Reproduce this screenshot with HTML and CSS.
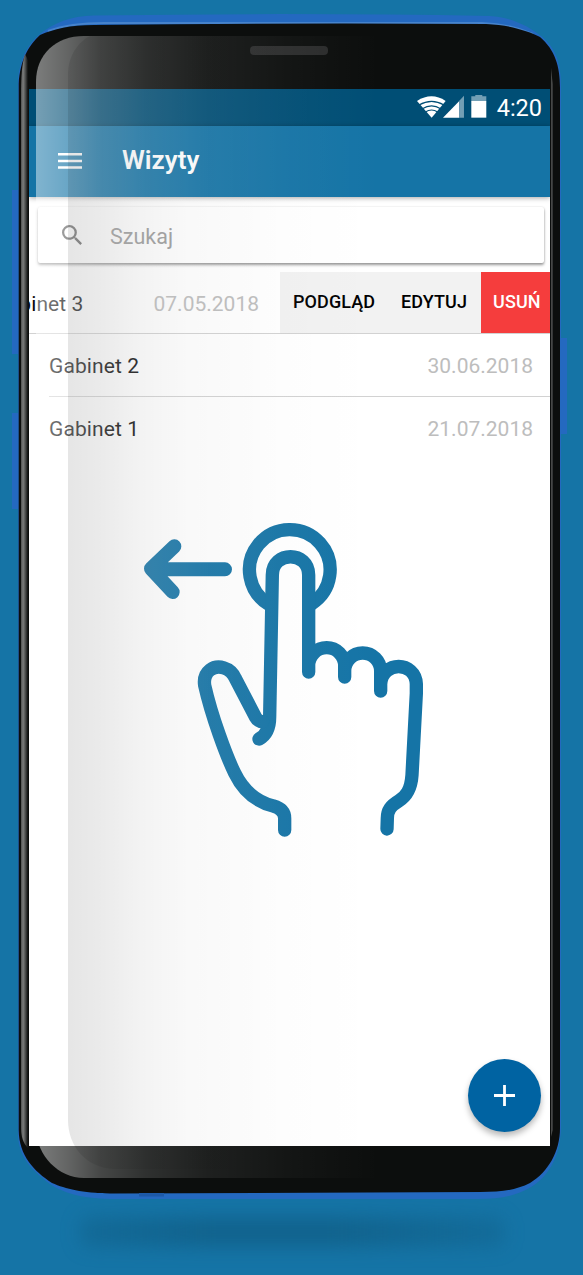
FILE: index.html
```html
<!DOCTYPE html>
<html lang="pl">
<head>
<meta charset="utf-8">
<title>Wizyty</title>
<link rel="stylesheet" href="styles.css">
</head>
<body>
<div class="stage">
  <svg class="layer chassis" viewBox="0 0 583 1275" aria-hidden="true">
    <defs>
      <linearGradient id="rim" x1="20.5" x2="28" y1="0" y2="0" gradientUnits="userSpaceOnUse">
        <stop offset="0" stop-color="#454746"/>
        <stop offset=".35" stop-color="#7b7d7c"/>
        <stop offset=".6" stop-color="#555756"/>
        <stop offset="1" stop-color="#0c0e0d"/>
      </linearGradient>
      <linearGradient id="floor" x1="0" x2="1" y1="0" y2="0">
        <stop offset="0" stop-color="#11628c" stop-opacity=".55"/>
        <stop offset=".3" stop-color="#11628c" stop-opacity=".95"/>
        <stop offset=".6" stop-color="#11628c" stop-opacity=".95"/>
        <stop offset="1" stop-color="#11628c" stop-opacity=".45"/>
      </linearGradient>
      <filter id="soft" x="-20%" y="-150%" width="140%" height="400%" color-interpolation-filters="sRGB"><feGaussianBlur stdDeviation="9"/></filter>
    </defs>
    <rect x="80" y="1217" width="425" height="30" rx="10" fill="url(#floor)" filter="url(#soft)"/>
    <path fill="#2469c0" d="M12 190h7v164h-7zM12 413h7v96h-7zM560 338h7v96h-7z"/>
    <path fill="#2469c0" d="M18 80C20 58 28 44 40 34C54 23 70 16 94 15.500Q300 12.500 490 16C512 17 530 27 541 36C556 48 561 64 561 86V1128C560 1160 546 1178 531 1187C516 1196 500 1199 478 1199H110C80 1198 64 1193 50 1184C32 1170 19 1158 18 1135Z"/>
    <path fill="none" stroke="#4683cc" stroke-width="2" d="M48 31Q70 23 104 23H482Q510 24 533 34"/>
    <path fill="#0c0e0d" d="M18.700 84C20 60 29 45 40 35C54 29 70 25 94 25Q300 22.500 486 24C510 25 528 31 540 37C555 50 560 66 560 88V1128C560 1152 548 1172 530 1183C516 1190 502 1192 480 1192L110 1193.500C82 1193 66 1189 52 1183C34 1171 19 1156 18.700 1130Z"/>
    <rect x="139" y="1193" width="25" height="3.500" fill="#1d59a8"/>
    <path fill="url(#rim)" d="M25 54C22 64 21 76 21 92V1128C21 1136 23 1143 28 1148V60Z"/>
    <path fill="#555756" d="M551.200 68L552.600 84V1130L551.200 1137Z"/>
    <rect x="250" y="46" width="78" height="9" rx="4" fill="#2a2b2b"/>
  </svg>

  <main class="screen">
    <div class="status">
      <svg class="status-icons" viewBox="0 0 211 72" aria-hidden="true">
        <path fill="#fff" d="M44 68L0 18Q44-10 86 18Z"/>
        <g fill="none" stroke="#004e75" stroke-width="3.500">
          <path d="M6 30Q44 8 81 30M16 41Q44 24 71 41M25 51Q44 39 62 51"/>
        </g>
        <path fill="#fff" d="M78 68L127 18V68Z"/>
        <path fill="#739fb5" d="M127 17L141 2V68H127Z"/>
        <path fill="#739fb5" d="M163 4H175V0H196V4H208V19H163Z"/>
        <path fill="#fff" d="M163 18H208V68H163Z"/>
      </svg>
      <span class="clock">4:20</span>
    </div>
    <header class="toolbar">
      <svg class="menu" viewBox="0 0 24 16" aria-hidden="true"><path fill="#fff" d="M0 0h24v2.500H0zM0 6.700h24v2.500H0zM0 13.300h24v2.500H0z"/></svg>
      <h1 class="title">Wizyty</h1>
    </header>
    <div class="search">
      <svg class="search-icon" viewBox="3 3 17.500 17.500" aria-hidden="true"><path fill="#616161" d="M15.500 14h-.79l-.28-.27A6.471 6.471 0 0 0 16 9.500 6.500 6.500 0 1 0 9.500 16c1.610 0 3.090-.59 4.230-1.570l.27.28v.79l5 4.990L20.490 19l-4.990-5zm-6 0C7.010 14 5 11.990 5 9.500S7.010 5 9.500 5 14 7.010 14 9.500 11.990 14 9.500 14z"/></svg>
      <span class="placeholder">Szukaj</span>
    </div>
    <div class="row swiped">
      <span class="name">Gabinet 3</span>
      <span class="date">07.05.2018</span>
      <div class="actions">
        <span class="action view">PODGLĄD</span>
        <span class="action edit">EDYTUJ</span>
        <span class="action remove">USUŃ</span>
      </div>
    </div>
    <div class="row lined"><span class="name">Gabinet 2</span><span class="date">30.06.2018</span></div>
    <div class="row"><span class="name">Gabinet 1</span><span class="date">21.07.2018</span></div>
    <svg class="gesture" viewBox="0 0 960 1050" aria-hidden="true">
      <g fill="none" stroke="#1574a6" stroke-width="40" stroke-linejoin="round">
        <path stroke-linecap="round" stroke-width="42" d="M133 139L63 206L128 276M90 208H285"/>
        <path d="M418 314A121 121 0 1 1 544 312"/>
        <g stroke-linecap="round">
          <path d="M387 717Q419 700 419 650L427 225C427 152 536 152 536 225V516V497A54 54 0 0 1 644 497V531V513A54 54 0 0 1 752 513V573V552C756 482 856 482 859 552V580L846 825C843 870 828 890 806 903C783 917 772 930 772 955L771 987"/>
          <path d="M398 665Q384 665 377 652L316 535C302 502 263 492 240 510C222 524 222 542 224 556C245 650 290 770 314 819C343 879 382 906 430 918C451 924 464 936 464 955V990"/>
        </g>
      </g>
    </svg>
    <div class="footer">
      <button class="fab" aria-label="Dodaj"><svg class="plus" viewBox="0 0 21 21" aria-hidden="true"><path d="M10.500 0V21M0 10.500H21" stroke="#fff" stroke-width="2.800"/></svg></button>
    </div>
  </main>

  <svg class="layer glass" viewBox="0 0 583 1275" aria-hidden="true">
    <defs>
      <linearGradient id="shine" x1="36" x2="380" y1="0" y2="0" gradientUnits="userSpaceOnUse">
        <stop offset="0" stop-color="#fff" stop-opacity=".46"/>
        <stop offset=".093" stop-color="#fff" stop-opacity=".36"/>
        <stop offset=".19" stop-color="#fff" stop-opacity=".235"/>
        <stop offset=".32" stop-color="#fff" stop-opacity=".145"/>
        <stop offset=".5" stop-color="#fff" stop-opacity=".075"/>
        <stop offset=".75" stop-color="#fff" stop-opacity=".03"/>
        <stop offset="1" stop-color="#fff" stop-opacity="0"/>
      </linearGradient>
      <linearGradient id="shade" x1="68" x2="380" y1="0" y2="0" gradientUnits="userSpaceOnUse">
        <stop offset="0" stop-color="#000" stop-opacity=".1"/>
        <stop offset=".1" stop-color="#000" stop-opacity=".082"/>
        <stop offset=".22" stop-color="#000" stop-opacity=".05"/>
        <stop offset=".38" stop-color="#000" stop-opacity=".025"/>
        <stop offset=".7" stop-color="#000" stop-opacity=".008"/>
        <stop offset="1" stop-color="#000" stop-opacity="0"/>
      </linearGradient>
    </defs>
    <path fill="url(#shine)" d="M380 36H84C56 36 36 54 36 82V1130C37 1155 58 1178 84 1178H380Z"/>
    <path fill="url(#shade)" d="M380 36H90C78 42 68 56 68 74V1120C68 1146 86 1168 114 1169H380Z"/>
  </svg>
</div>
</body>
</html>
```
FILE: styles.css
```css
* { box-sizing: border-box; }
body {
  margin: 0;
  background: #1574a6;
  font-family: Roboto, "Liberation Sans", sans-serif;
}
.stage {
  position: relative;
  width: 583px;
  height: 1275px;
  padding: 89px 33px 0 29px;
  overflow: hidden;
}
.layer {
  position: absolute;
  inset: 0;
  width: 583px;
  height: 1275px;
  pointer-events: none;
}
.screen {
  position: relative;
  display: flex;
  flex-direction: column;
  width: 521px;
  height: 1057px;
  background: #fff;
  overflow: hidden;
}
.status {
  display: flex;
  justify-content: flex-end;
  align-items: center;
  flex: none;
  height: 37px;
  padding-right: 8px;
  background: #004e75;
  color: #fff;
}
.status-icons { width: 70.3px; height: 24px; margin: -2px 9px 0 0; }
.clock { font-size: 23.5px; line-height: 36px; padding-top: 1px; }
.toolbar {
  display: flex;
  align-items: flex-start;
  flex: none;
  height: 71px;
  padding-left: 29px;
  background: #1574a6;
  box-shadow: 0 1px 5px rgba(0, 0, 0, .35);
}
.menu { width: 24px; height: 16px; margin: 27px 40px 0 0; }
.title { margin: 0; color: #fff; font-size: 26px; font-weight: 600; line-height: 69px; }
.search {
  display: flex;
  align-items: center;
  flex: none;
  height: 56px;
  margin: 10px 6px 9px 9px;
  padding-left: 24px;
  border-radius: 2px;
  background: #fff;
  box-shadow: 0 2px 3px rgba(0, 0, 0, .4), 0 0 2px rgba(0, 0, 0, .12);
}
.search-icon { width: 20px; height: 20px; margin-right: 28px; }
.placeholder { padding-top: 2px; color: #9b9b9b; font-size: 21.5px; }
.row {
  display: flex;
  justify-content: space-between;
  align-items: center;
  flex: none;
  height: 63px;
  margin-left: 20px;
  padding-right: 17px;
  font-size: 21px;
  white-space: nowrap;
}
.name { color: #0a0a0a; letter-spacing: .1px; }
.date { color: #bdbdbd; }
.lined { padding-top: 2px; border-bottom: 1px solid #d2d2d2; }
.swiped {
  justify-content: flex-end;
  height: 62px;
  margin: 0;
  padding: 0;
  border-bottom: 1px solid #d2d2d2;
}
.swiped .name { margin-right: 70px; padding-top: 2px; }
.swiped .date { margin-right: 21px; padding-top: 2px; }
.actions { display: flex; height: 61px; font-size: 18px; font-weight: 500; line-height: 60px; text-align: left; letter-spacing: .1px; }
.action { background: #f2f2f2; color: #000; }
.view { width: 108px; padding-left: 13px; }
.edit { width: 93px; padding-left: 13px; }
.remove { width: 69px; padding-left: 12px; background: #f53d3d; color: #fff; }
.gesture { flex: none; width: 320px; height: 350px; margin: 40px 0 0 101px; }
.footer { display: flex; justify-content: flex-end; margin-top: auto; padding: 0 9px 14px 0; }
.fab {
  display: flex;
  align-items: center;
  justify-content: center;
  width: 73px;
  height: 73px;
  padding: 0;
  border: 0;
  border-radius: 50%;
  background: #0063a2;
  box-shadow: 0 4px 6px rgba(0, 0, 0, .28);
}
.plus { width: 21px; height: 21px; }
```
